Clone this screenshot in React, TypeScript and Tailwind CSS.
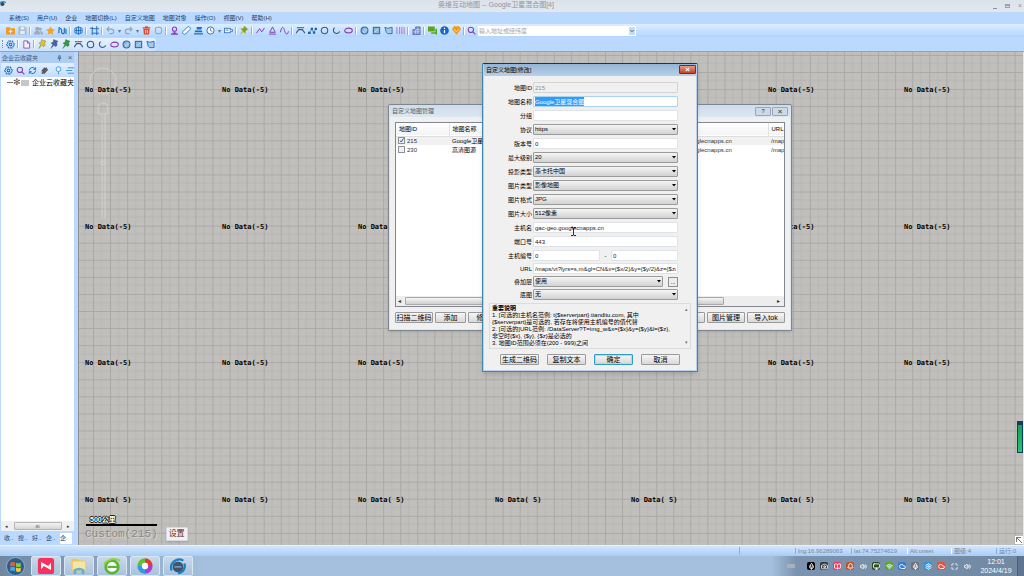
import React, { useEffect, useRef } from 'react';
import { Bell, BookOpen, Camera, ChevronDown, Cloud, Maximize, Mic, Monitor, Settings, Volume2, Wifi } from 'lucide-react';

const BLUE = '#2a6cb8';
const NAVY = '#3b5878';
const PURPLE = '#8a3fb0';

// every glyph is drawn on a 10x10 box
const glyphs: Record<string, React.ReactNode> = {
  add: <><path d="M0 1.500h4l1 1h5v7H0z" fill="#f59a23" /><path d="M5 4v4M3 6h4" stroke="#fff" /></>,
  save: <><path d="M1 1h7l1 1v7H1z" fill="#b4c0ce" stroke="#93a3b5" strokeWidth=".6" /><path d="M3 1h4v3H3zM2.5 5.5h5V9h-5z" fill="#e6edf5" /></>,
  users: <g fill="#9aabbd"><circle cx="3.5" cy="3" r="2.200" /><circle cx="6.8" cy="3.4" r="1.8" /><path d="M0 9.500c0-6 7-6 7 0zM7.5 9.500H10c0-3-1.500-4-3-4" /></g>,
  star: <path d="M5 .2l1.500 3.200 3.400.5-2.500 2.400.7 3.400L5 8.100 1.900 9.700l.7-3.400L.1 3.900l3.400-.5z" fill="#f9a11b" />,
  route: <g fill="none" stroke="#1f6fc0" strokeWidth="1.300"><path d="M1 8V4.500a1.500 1.500 0 013 0V7a1.500 1.500 0 003 0V2" /><path d="M8.800 3v6M.3 2h2" /></g>,
  globe: <g fill="none" stroke="#1f6fc0" strokeWidth="1"><path d="M1 2.500l4-1.500 4 1.500v5L5 9 1 7.500zM5 .5v9M1 5h8M3 2v6M7 2v6" /></g>,
  crop: <path d="M2.500 1v9M0 2.500h3M2.500 8H10M7.500 0v10M2.500 3H10" fill="none" stroke={BLUE} strokeWidth="1.100" />,
  undo: <path d="M3.500 1L1 3.500 3.500 6M1 3.500h5a2.500 2.500 0 010 5H4" fill="none" stroke="#8fa4bb" strokeWidth="1.200" />,
  redo: <path d="M6.500 1L9 3.500 6.500 6M9 3.500H4a2.500 2.500 0 000 5h2" fill="none" stroke="#8fa4bb" strokeWidth="1.200" />,
  trash: <><path d="M1.500 3h7l-.6 6.500H2.100z" fill="#e0482f" /><path d="M.8 2h8.400M3.500 1h3" stroke="#e0482f" strokeWidth="1.300" /><path d="M4 4.500v3.500M6 4.500v3.500" stroke="#fff" strokeWidth=".8" /></>,
  round: <rect x="1.500" y="1.500" width="7" height="7" rx="2" fill="none" stroke="#7f98b4" />,
  place: <g fill="none" stroke={PURPLE} strokeWidth="1.200"><circle cx="5" cy="3.500" r="2.300" /><path d="M5 6v2M1 9h8M3 7.500l2 1 2-1" /></g>,
  ruler: <rect x="3" y="0" width="4" height="10" rx="1.500" transform="rotate(45 5 5)" fill="#f2f7fd" stroke={BLUE} strokeWidth=".9" />,
  stamp: <path d="M3 1h6L8 4H3zM1 5h8v2H1zM0 8h10v1.500H0z" fill="#1f6fc0" />,
  clock: <><circle cx="5" cy="5" r="4" fill="#f2f7fd" stroke={BLUE} /><path d="M5 2.500V5l2 1" fill="none" stroke={BLUE} strokeWidth=".8" /></>,
  video: <g fill="#f2f7fd" stroke={BLUE} strokeWidth=".9"><rect x=".5" y="2.500" width="6.500" height="5" /><path d="M7 4h2.500v2H7M2 4.500h3" /></g>,
  pinMix: <path d="M5 0l4 4-1.500.3L6 6v2.500L3.500 6 1 9l2-3.500L1 3l2.800-.5z" fill="#6fa52c" stroke="#d9a518" strokeWidth=".6" />,
  zigzag: <path d="M.5 8L4 3l2.500 3.500L9.500 2" fill="none" stroke={PURPLE} strokeWidth="1.100" />,
  triangle: <path d="M5 1L8 7H2zM1 9h8" fill="none" stroke={PURPLE} strokeWidth="1.100" />,
  curve: <path d="M.5 7C2-1 4 1 5 5s3 6 4.500 1" fill="none" stroke={PURPLE} strokeWidth="1.100" />,
  bridge: <path d="M1 2h8M0 8l3-4h4l3 4" fill="none" stroke={NAVY} strokeWidth="1.200" />,
  points: <><path d="M1.500 7.500L4 4l2.500 3L8.500 3" fill="none" stroke={BLUE} strokeWidth=".8" /><path d="M0 6.500h3v2.500H0zM3 2h2.500v2.500H3zM5.500 6H8v2.500H5.500zM7.500 2H10v2.500H7.500z" fill="#1f5fa8" /></>,
  circle: <circle cx="5" cy="5" r="3.600" fill="none" stroke={NAVY} strokeWidth="1.200" />,
  arc: <path d="M3 1.800A3.600 3.600 0 108.500 6" fill="none" stroke={NAVY} strokeWidth="1.200" />,
  ellipse: <ellipse cx="5" cy="5" rx="4.200" ry="2.600" fill="none" stroke={PURPLE} strokeWidth="1.200" />,
  disc: <><circle cx="5" cy="5" r="3.800" fill="#8dbbe0" stroke={BLUE} strokeWidth="1.200" /><path d="M3 7l4-4M4 8l4-4" stroke="#dcebf8" strokeWidth=".6" /></>,
  square: <><rect x="1.500" y="1.500" width="7" height="7" fill="#8dbbe0" stroke={BLUE} strokeWidth="1.200" /><path d="M3 7l4-4" stroke="#dcebf8" strokeWidth=".8" /></>,
  poly: <path d="M1 1.500l3 1 5-1v7H4L2.500 7z" fill="#a5cae8" stroke={BLUE} />,
  bars: <><path d="M1 1v8M4 1v8M9 1v8" stroke="#b06cd0" strokeWidth="1" /><path d="M6.500 1v8" stroke="#e05a8a" /></>,
  building: <><path d="M1 4h3V1h5v8.500H1z" fill="#7d8fd0" stroke="#4b58a8" strokeWidth=".8" /><path d="M4 4v5M6.500 1.500v7.500M1 6.500h8M4 4h5" stroke="#dfe4fa" strokeWidth=".7" /></>,
  chat: <path d="M0 .5h7.500v5.500H0zM8.200 3H10v7L8 8.500H3.500V7h4.700z" fill="#5aa51e" />,
  info: <><circle cx="5" cy="5" r="4.800" fill="#1667c4" /><path d="M5 4.500V8M5 2v1.300" stroke="#fff" strokeWidth="1.400" /></>,
  gem: <><path d="M2 .3h6l2 3.200L5 9.800 0 3.500z" fill="#f39a1b" /><path d="M2.500 3.500L5 6.500l2.500-3" fill="none" stroke="#ffe6b5" strokeWidth=".9" /></>,
  search: <g fill="none" stroke={PURPLE} strokeWidth="1.200"><circle cx="4.300" cy="4.300" r="3" /><path d="M6.600 6.600L9.300 9.300" /></g>,
  gear: <g fill="none" stroke="#1f6fc0"><path d="M3 1.200h4L9.300 5 7 8.800H3L.7 5z" strokeWidth="1.300" strokeDasharray="2.500 .7" /><circle cx="5" cy="5" r="1.500" strokeWidth="1.200" /></g>,
  doc: <path d="M2 1h4l2.500 2.500V9H2zM6 1v2.500h2.500" fill="#f6effc" stroke={PURPLE} strokeWidth=".9" />,
  sync: <path d="M1.500 5A3.500 3.500 0 018 3.300M8.500 5A3.500 3.500 0 012 6.700M8.500 1.500v2.200H6M1.500 8.500V6.300H4" fill="none" stroke="#1f6fc0" strokeWidth="1.100" />,
  clip: <path d="M2 8.500L7.500 2M2 6L5.500 2M4 8.500L8.500 3.500" stroke="#555" strokeWidth="1.600" />,
  bulb: <><circle cx="5" cy="3.500" r="2.700" fill="#dff0ff" stroke="#3d9bd8" /><path d="M5 6v3.500" stroke="#3d9bd8" /></>,
  list: <path d="M2 2h8M0 5h7M2 8h8" stroke="#3d9bd8" strokeWidth="1.100" />,
};

const Glyph = ({ name, className = 'h-[9px] w-[9px]' }: { name: string; className?: string }) => (
  <svg viewBox="0 0 10 10" className={`shrink-0 ${className}`} aria-hidden="true">{glyphs[name]}</svg>
);

const Pin = ({ color }: { color: string }) => (
  <svg viewBox="0 0 10 10" className="h-[10px] w-[9px]" aria-hidden="true">
    <path d="M4 0l5 2-1.500 1.500.5 3L6 8 4.500 6.500 1 10l2-4.500L1 4l2.500-1z" fill={color} stroke="#4b5b52" strokeWidth=".4" />
  </svg>
);

const ToolButton = ({ name }: { name: string }) => (
  <button aria-label={name} className="flex h-2.5 w-2.5 shrink-0 items-center justify-center"><Glyph name={name} /></button>
);

const Separator = () => <span className="h-2 w-0.5 shrink-0 border-r border-white bg-[#8db4de]" />;

const mainTools = [
  'add', 'save', '|', 'users', 'star', 'route', '|', 'globe', '|', 'crop', '|', 'undo', '.', 'redo', '.', 'trash', 'round', '|',
  'place', 'ruler', 'stamp', 'clock', '.', 'video', '|', 'pinMix', '|', 'zigzag', 'triangle', 'curve', '|',
  'bridge', 'points', 'circle', 'arc', 'ellipse', '|', 'disc', 'square', 'poly', 'bars', '|', 'building', '|',
  'chat', 'info', 'gem', '|',
];

const menus = ['系统(S)', '用户(U)', '企业', '地图切换(L)', '自定义地图', '地图对象', '操作(O)', '视图(V)', '帮助(H)'];

const TopBars = () => (
  <header className="shrink-0">
    <div className="relative flex h-3 items-center justify-center bg-gradient-to-b from-[#dbe2ea] to-[#e1e8f0]">
      <svg viewBox="0 0 10 10" className="absolute left-0 top-0 h-2 w-1.5" aria-hidden="true">
        <circle cx="4" cy="5" r="3.500" fill="#2c4a68" /><path d="M0 3q5-4 10 0" stroke="#2f86c8" strokeWidth="2" fill="none" />
      </svg>
      <h1 className="pb-1 pr-8 text-[7px] leading-none text-[#8f959d]">奥维互动地图 -- Google卫星混合图[4]</h1>
      <div className="absolute right-0.5 top-0.5 flex gap-2">
        <button aria-label="minimize" className="flex h-[7px] w-1 items-end"><span className="h-px w-1 bg-[#8b929b]" /></button>
        <button aria-label="maximize" className="mt-0.5 h-1 w-[5px] border border-t-2 border-[#9aa1aa]" />
        <button aria-label="close" className="h-[7px] w-1 text-[7px] leading-[7px] text-[#8b929b]">×</button>
      </div>
    </div>
    <nav className="flex h-3 items-center gap-2 bg-[#bbd9fe] px-[9px] text-[6px] leading-none text-[#1e3c66]">
      {menus.map((m) => <button key={m}>{m}</button>)}
    </nav>
    <div className="flex h-[13px] items-center gap-0.5 bg-gradient-to-b from-[#dceeff] to-[#b1d5fd] pl-[5px]">
      {mainTools.map((t, i) => {
        if (t === '|') return <Separator key={i} />;
        if (t === '.') return <span key={i} className="flex w-1 justify-center text-[6px] leading-none text-[#5d7795]">▾</span>;
        return <ToolButton key={i} name={t} />;
      })}
      <label className="flex items-center gap-0.5">
        <Glyph name="search" />
        <input aria-label="search" placeholder="输入地址或经纬度" className="h-[10px] w-[150px] bg-white px-px text-[6px] leading-none placeholder:text-[#a5a5a5]" />
      </label>
      <button aria-label="search history" className="-ml-0.5 flex h-[10px] w-2 items-center justify-center border border-white bg-[#c3dcf8] text-[#41658f]">
        <ChevronDown className="h-1.5 w-1.5" strokeWidth={4} />
      </button>
    </div>
    <div className="flex h-[15px] items-center border-b border-[#8fa4bb] bg-[#bbd9fe]">
      <div className="flex h-[13px] items-center gap-0.5 rounded-r bg-gradient-to-b from-[#e6f1ff] to-[#cde2fc] pl-0.5 pr-px">
        <span className="h-2 w-px border-l border-dotted border-[#6f93bb]" />
        <ToolButton name="gear" /><Separator /><ToolButton name="doc" /><Separator />
        {['#e3c81c', '#3f62a8', '#25a03a'].map((c) => (
          <button key={c} aria-label="pin" className="flex w-2.5 justify-center"><Pin color={c} /></button>
        ))}
        {['bridge', 'circle', 'arc', 'ellipse', 'disc', 'square', 'poly'].map((t) => <ToolButton key={t} name={t} />)}
      </div>
    </div>
  </header>
);

const FavoritesPanel = () => (
  <aside className="flex w-[79px] shrink-0 flex-col border-r border-[#8c8f93] bg-[#bbd9fe] pl-px pr-1">
    <div className="flex h-[11px] items-center bg-[#aecdf2] px-px text-[6px] leading-none text-[#3d5f88]">
      <h2 className="flex-1 whitespace-nowrap">企业云收藏夹</h2>
      <button aria-label="pin panel" className="w-2.5">
        <svg viewBox="0 0 6 8" className="h-1.5 w-[5px]"><path d="M2 1h2v3H2zM.5 4.500h5M3 5v3" fill="none" stroke="#3d5f88" /></svg>
      </button>
      <button aria-label="close panel" className="w-1.5 text-[8px] leading-none">×</button>
    </div>
    <div className="flex h-[14px] items-center gap-0.5 overflow-hidden bg-gradient-to-b from-[#e3f0ff] to-[#c2dcfb] pl-0.5">
      <ToolButton name="gear" /><ToolButton name="search" /><ToolButton name="sync" /><ToolButton name="clip" />
      <span className="h-2 w-px bg-[#6f93bb]" />
      <ToolButton name="bulb" /><ToolButton name="list" />
    </div>
    <div className="flex-1 overflow-hidden bg-white pl-1.5 pt-0.5">
      <div className="flex items-center whitespace-nowrap text-[7px] leading-[7px] text-black">
        <span className="h-px w-1.5 bg-[#777]" />
        <span className="text-[9px] leading-[7px] text-[#555]">✻</span>
        <span className="mr-[3px] h-1.5 w-2 bg-[#c6c6c6]" />
        企业云收藏夹
      </div>
    </div>
    <div className="flex h-[10px] items-center justify-between bg-[#eef0f2] px-1 text-[5px] leading-none text-[#333]">
      <span>◂</span>
      <span className="flex h-2 w-12 items-center justify-center rounded-[1px] border border-[#b4b4b4] bg-gradient-to-b from-[#f4f4f4] to-[#d4d4d4]">ııı</span>
      <span>▸</span>
    </div>
    <div className="flex h-[14px] items-center gap-[3px] overflow-hidden whitespace-nowrap pl-[3px] text-[6px] leading-none text-[#24446e]">
      {['收..', '搜..', '好..', '企..'].map((t) => <button key={t} className="w-[11px] text-left">{t}</button>)}
      <button className="h-[11px] w-3 rounded-[1px] bg-white text-left">企.</button>
    </div>
  </aside>
);

const TILE = 136.53;

const MapView = () => (
  <main className="relative min-w-0 flex-1 overflow-hidden border-r border-[#e4e8ee] bg-[#c1bfbb]">
    <svg className="absolute inset-0 h-full w-full" aria-hidden="true">
      <defs>
        <pattern id="mesh" width="17.067" height="17.067" x="14" y="3" patternUnits="userSpaceOnUse">
          <path d="M0 8.500h17.100M8.500 0v17.100" stroke="#b5b4b4" strokeWidth=".9" />
          <path d="M0 .5h17.100M.5 0v17.100" stroke="#aaa9a8" strokeWidth="1" />
        </pattern>
      </defs>
      <rect width="100%" height="100%" fill="url(#mesh)" />
      <g fill="none" stroke="#d6d5d1" strokeWidth=".8">
        <circle cx="24" cy="29" r="13" />
        <path d="M19 62v-6a5 5 0 0110 0v6zM23 62v105M26 62v105" />
        <circle cx="24" cy="111" r="2" />
      </g>
    </svg>
    {[0, 1, 2, 3].map((row) =>
      [0, 1, 2, 3, 4, 5, 6].map((col) => (
        <span
          key={`${row}-${col}`}
          className="absolute whitespace-pre font-['DejaVu_Sans_Mono',monospace] text-[7px] font-bold leading-2 text-black"
          style={{ left: Math.round(6 + col * TILE), top: Math.round(34 + row * TILE) }}
        >
          {row === 3 ? 'No Data( 5)' : 'No Data(-5)'}
        </span>
      ))
    )}
    <div className="absolute bottom-[3px] left-1.5">
      <div className="ml-px w-[71px] border-b-2 border-black px-1 text-[7px] font-bold leading-[9px] text-white [text-shadow:1px_0_#111,-1px_0_#111,0_1px_#111,0_-1px_#111]">500公里</div>
      <div className="flex items-center gap-2">
        <span className="font-['Liberation_Mono',monospace] text-[11px] leading-4 text-[#8b8a87] [text-shadow:1px_1px_#d6d5d1]">Custom(215)</span>
        <button className="h-[14px] w-[22px] rounded-[1px] border border-[#d4dbe5] bg-[#f1f1f3] text-[8px] leading-none text-[#6e1f1f] shadow-sm">设置</button>
      </div>
    </div>
    <div className="absolute bottom-[92px] right-0 h-8 w-1.5 border border-t-4 border-[#123f55] bg-gradient-to-b from-[#1c9a5c] to-[#2cc36e]" />
    <button aria-label="expand" className="absolute bottom-px right-0 flex h-2 w-2 items-center justify-center bg-white">
      <svg viewBox="0 0 8 8" className="h-2 w-2"><path d="M1.500 6V1.500H6M1.500 1.500L7 7" fill="none" stroke="#555" strokeWidth=".8" /></svg>
    </button>
  </main>
);

const WinButton = ({ children, border = 'border-[#9a9a9a]', className = '' }: { children: React.ReactNode; border?: string; className?: string }) => (
  <button className={`h-[11px] shrink-0 whitespace-nowrap rounded-[1px] border bg-gradient-to-b from-[#f6f6f6] to-[#d8d8d8] text-[7px] leading-none text-black ${border} ${className}`}>
    {children}
  </button>
);

const maps = [
  { id: 215, name: 'Google卫星混合图', checked: true },
  { id: 230, name: '高清图源', checked: false },
];

const ManagerDialog = () => (
  <section className="absolute left-[388px] top-[104px] w-[404px] rounded-t-[2px] border border-[#7e8790] bg-[#dce6f1] px-px pb-px shadow">
    <div className="flex h-3 items-center bg-gradient-to-b from-[#cfdcea] to-[#dce7f3] px-0.5 text-[6px] leading-none text-[#555c66]">
      <h2 className="flex-1">自定义地图管理</h2>
      <button aria-label="help" className="h-[9px] w-4 rounded-[1px] border border-[#98a8ba] bg-[#ccd9e7] font-bold">?</button>
      <button aria-label="close" className="ml-px h-[9px] w-4 rounded-[1px] border border-[#98a8ba] bg-[#ccd9e7] text-[8px] font-bold leading-[7px]">×</button>
    </div>
    <div className="bg-[#f0f0f0] px-[5px] pb-1.5 pt-[5px]">
      <div className="overflow-hidden border border-[#82878f] bg-white">
        <table className="w-full table-fixed border-collapse text-[6px] leading-none text-black">
          <colgroup>
            <col className="w-[53px]" /><col className="w-[212px]" /><col className="w-[107px]" /><col />
          </colgroup>
          <thead>
            <tr className="h-[13px] border-b border-[#dedede] bg-gradient-to-b from-white to-[#f3f4f5] text-left">
              <th className="border-r border-[#e3e3e3] p-0 pl-[3px] font-normal">地图ID</th>
              <th className="p-0 pl-[3px] font-normal">地图名称</th>
              <th className="border-r border-[#e3e3e3] p-0 pl-[3px] font-normal">主机名</th>
              <th className="p-0 pl-[3px] font-normal">URL</th>
            </tr>
          </thead>
          <tbody>
            {maps.map((m) => (
              <tr key={m.id} className={`h-[9px] ${m.checked ? 'bg-[#f1f1f1]' : ''}`}>
                <td className="p-0 pl-0.5">
                  <label className="flex items-center gap-0.5 text-[#333]">
                    <span className="relative flex h-[7px] w-[7px]">
                      <input type="checkbox" defaultChecked={m.checked} className="h-[7px] w-[7px] appearance-none border border-[#8d9299] bg-[#eef0f3]" />
                      {m.checked && (
                        <svg viewBox="0 0 7 7" className="pointer-events-none absolute inset-0"><path d="M2 3.500l1.200 1.500L5.500 1.500" fill="none" stroke="#2d4f9c" /></svg>
                      )}
                    </span>
                    {m.id}
                  </label>
                </td>
                <td className="truncate p-0 pl-[3px]">{m.name}</td>
                <td className="whitespace-nowrap p-0 pl-0.5 text-[#333]">gac-geo.googlecnapps.cn</td>
                <td className="overflow-hidden whitespace-nowrap p-0 pl-[3px] text-[#333]">/maps</td>
              </tr>
            ))}
          </tbody>
        </table>
        <div className="h-[142px]" />
        <div className="flex h-[10px] items-center bg-[#ededed] px-0.5 text-[6px] leading-none text-[#333]">
          <span className="w-[7px]">◂</span>
          <span className="h-2 w-[319px] rounded-[1px] border border-[#a8a8a8] bg-gradient-to-b from-[#f5f5f5] to-[#cfcfcf]" />
          <span className="ml-auto w-[7px] text-center">▸</span>
        </div>
      </div>
      <div className="mt-[5px] flex gap-0.5">
        <WinButton className="w-[38px]">扫描二维码</WinButton>
        <WinButton className="w-[31px]">添加</WinButton>
        <WinButton className="w-[31px]">修改</WinButton>
        <WinButton className="ml-auto w-[38px]">分享</WinButton>
        <WinButton className="w-[38px]">图片管理</WinButton>
        <WinButton className="w-[38px]">导入tok</WinButton>
      </div>
    </div>
  </section>
);

const inputBase = 'h-[11px] min-w-0 flex-1 rounded-[1px] border px-px text-[6px] leading-none';
const inputStyle = `${inputBase} border-[#dfe3e8] bg-white text-[#222]`;

const Field = ({ label, id, children }: { label: string; id: string; children: React.ReactNode }) => (
  <div className="flex h-[11px] items-center">
    <label htmlFor={id} className="w-[49px] shrink-0 pr-px text-right text-[6px] leading-none text-black">{label}</label>
    {children}
  </div>
);

const Select = ({ id, value }: { id: string; value: string }) => (
  <div className="relative flex min-w-0 flex-1">
    <select id={id} className="h-[11px] w-full appearance-none rounded-[1px] border border-[#9b9b9b] bg-gradient-to-b from-[#f5f5f5] to-[#d2d2d2] px-px text-[6px] leading-[9px] text-black">
      <option>{value}</option>
    </select>
    <svg viewBox="0 0 4 3" className="pointer-events-none absolute right-0.5 top-1 h-[3px] w-1"><path d="M0 0h4L2 2.600z" fill="#000" /></svg>
  </div>
);

const selects = [
  ['最大级别', '20'], ['投影类型', '墨卡托中国'], ['图片类型', '影像地图'], ['图片格式', 'JPG'], ['图片大小', '512像素'],
];

const EditDialog = () => {
  const nameRef = useRef<HTMLInputElement>(null);

  useEffect(() => {
    nameRef.current?.focus();
    nameRef.current?.select();
  }, []);

  return (
    <section className="absolute left-[482px] top-[63px] w-[216px] rounded-t-[2px] border border-t-[#26323f] border-x-[#3f86a8] border-b-[#3f86a8] bg-[#b9d1ea] px-px pb-px shadow-md">
      <div className="flex h-3 items-start bg-gradient-to-b from-[#94b4d6] to-[#b7d0e9] pl-0.5 text-[6px] leading-3 text-black">
        <h2 className="flex-1">自定义地图[修改]</h2>
        <button aria-label="close" className="mt-px h-[9px] w-[17px] rounded-[1px] border border-[#7b2c22] bg-gradient-to-b from-[#e09a8b] to-[#c2401f] text-[8px] font-bold leading-[6px] text-white">×</button>
      </div>
      <div className="bg-[#f0f0f0] pb-[5px] pt-1.5">
        <form className="flex flex-col gap-[3px] pr-[18px]">
          <Field label="地图ID" id="mapId"><input id="mapId" disabled value="215" className={`${inputBase} border-[#d4d4d4] bg-[#f0f0f0] text-[#8a8a8a]`} /></Field>
          <Field label="地图名称" id="name">
            <input id="name" ref={nameRef} defaultValue="Google卫星混合图" className={`${inputBase} border-[#a9d3ee] bg-white text-[#222] outline-none selection:bg-[#3399ff] selection:text-white`} />
          </Field>
          <Field label="分组" id="group"><input id="group" className={inputStyle} /></Field>
          <Field label="协议" id="protocol"><Select id="protocol" value="https" /></Field>
          <Field label="版本号" id="version"><input id="version" defaultValue="0" className={inputStyle} /></Field>
          {selects.map(([label, value]) => (
            <Field key={label} label={label} id={label}><Select id={label} value={value} /></Field>
          ))}
          <Field label="主机名" id="host"><input id="host" defaultValue="gac-geo.googlecnapps.cn" className={inputStyle} /></Field>
          <Field label="端口号" id="port"><input id="port" defaultValue="443" className={inputStyle} /></Field>
        </form>
        <form className="mt-[3px] flex flex-col gap-0.5 pr-[18px]">
          <Field label="主机编号" id="hostFrom">
            <input id="hostFrom" defaultValue="0" className={inputStyle} />
            <span className="w-[11px] text-center text-[6px] leading-none">-</span>
            <input aria-label="主机编号止" defaultValue="0" className={inputStyle} />
          </Field>
          <Field label="URL" id="url">
            <input id="url" defaultValue="/maps/vt?lyrs=s,m&gl=CN&x={$x/2}&y={$y/2}&z={$z/2}" className={inputStyle} />
          </Field>
          <Field label="叠加层" id="overlay">
            <Select id="overlay" value="使用" />
            <button type="button" className="ml-[5px] h-2.5 w-2.5 border border-[#8f8f8f] bg-[#ececec] text-[6px] leading-none">...</button>
          </Field>
          <Field label="底图" id="base"><Select id="base" value="无" /></Field>
        </form>
        <div className="mx-[5px] mt-[3px] flex h-[46px] border border-[#dcdcdc] text-[6px] leading-[7px] text-black">
          <div className="flex-1 pl-0.5 pt-px">
            <p className="font-bold">重要说明</p>
            <p>1. [可选的]主机名范例: t{'{$serverpart}'}.tianditu.com, 其中<br />{'{$serverpart}'}是可选的, 若存在将使用主机编号的值代替</p>
            <p>2. [可选的]URL范例: /DataServer?T=img_w&x={'{$x}'}&y={'{$y}'}&l={'{$z}'},<br />非空时{'{$x}, {$y}, {$z}'}是必选的</p>
            <p>3. 地图ID范围必须在(200 - 999)之间</p>
          </div>
          <div className="flex w-2 flex-col items-center justify-between py-0.5 text-[5px] text-[#777]"><span>▴</span><span>▾</span></div>
        </div>
        <div className="mt-[5px] flex justify-center gap-2">
          <WinButton className="w-[39px]">生成二维码</WinButton>
          <WinButton className="w-[39px]">复制文本</WinButton>
          <WinButton border="border-[#2f9fc4]" className="w-[39px] ring-1 ring-inset ring-[#9be0f5]">确定</WinButton>
          <WinButton className="w-[39px]">取消</WinButton>
        </div>
      </div>
    </section>
  );
};

const StatusBar = () => (
  <div className="flex h-[11px] shrink-0 items-center justify-end border-t border-[#e8f1fb] bg-gradient-to-b from-[#d3e6fc] to-[#a9cdf5] text-[6px] leading-none text-[#75869a]">
    <span className="h-2 w-14 border-l border-[#8fb0d6]" />
    <span className="w-14 border-l border-[#8fb0d6] pl-0.5">lng:16.96289063</span>
    <span className="w-14 border-l border-[#8fb0d6] pl-0.5">lat:74.75274619</span>
    <span className="w-11 border-l border-white pl-0.5">Alt:unset</span>
    <span className="w-[45px] border-l border-white pl-0.5">图级:4</span>
    <span className="w-7 border-l border-[#8fb0d6] pl-0.5">运行:0</span>
  </div>
);

const taskIcons: React.ReactNode[] = [
  <><rect x="1" y="1" width="18" height="18" rx="3" fill="#f4335f" /><path d="M4.500 5.500l8 4.500 3-3.500v8l-8-4.500-3 4z" fill="#fff" /></>,
  <><path d="M2 2h6l2 2h8v13H2z" fill="#e9c65c" /><path d="M3 5h14v10H3z" fill="#f7e6a0" /><path d="M4 19v-5q6-4 12 0v5h-3v-4H7v4z" fill="#5fb0e0" /></>,
  <><circle cx="10" cy="11" r="7" fill="#fff" stroke="#5cb531" strokeWidth="3" /><path d="M5 11h11" stroke="#5cb531" strokeWidth="2.500" /><path d="M1 8Q9-1 19 4" fill="none" stroke="#8fd63d" strokeWidth="2" /></>,
  <g fill="none" strokeWidth="5"><path d="M10 4a6 6 0 016 6" stroke="#e23b35" /><path d="M16 10a6 6 0 01-6 6" stroke="#a341d2" /><path d="M10 16a6 6 0 01-6-6" stroke="#2f9be6" /><path d="M4 10a6 6 0 016-6" stroke="#5fc032" /><circle cx="10" cy="10" r="3.500" fill="#fff" stroke="none" /></g>,
  <><circle cx="10" cy="11" r="6" fill="#3d566e" /><path d="M3 15A9 9 0 0116 4M17 7a8 8 0 01-7 11" fill="none" stroke="#1e7fc4" strokeWidth="2.500" /><path d="M6 11h8" stroke="#8ba6bd" strokeWidth="1.500" /></>,
];

const tray = [
  { bg: 'bg-black', Icon: Mic }, { bg: 'bg-[#34383e]', Icon: Camera }, { bg: 'bg-[#f4335f]', Icon: BookOpen },
  { bg: 'bg-[#b8562b]', Icon: Bell }, { bg: '', Icon: Volume2 }, { bg: 'bg-[#2c4a1b]', Icon: Monitor },
  { bg: 'bg-[#57a832]', Icon: Wifi }, { bg: 'bg-[#2f7fd6]', Icon: Cloud }, { bg: 'bg-[#6b747e]', Icon: Mic },
  { bg: 'bg-[#2a93e8]', Icon: Settings }, { bg: 'bg-[#e4513d]', Icon: Cloud }, { bg: '', Icon: Maximize }, { bg: '', Icon: Volume2 },
];

const Taskbar = () => (
  <footer className="flex h-5 shrink-0 items-center bg-gradient-to-r from-[#70879f] via-[#a5c0de] via-20% to-[#a5c0de]">
    <button aria-label="start" className="flex w-[31px] justify-center">
      <svg viewBox="0 0 20 20" className="h-[19px] w-[19px]">
        <circle cx="10" cy="10" r="9.500" fill="#2d5f8c" stroke="#9fc0dc" strokeWidth=".8" />
        <path d="M4.500 6q2.500-1.500 5 0v4q-2.500-1.500-5 0z" fill="#e8612c" /><path d="M10.500 6q2.500 1.500 5 0v4q-2.500 1.500-5 0z" fill="#8ccb3c" />
        <path d="M4.500 11q2.500-1.500 5 0v4q-2.500-1.500-5 0z" fill="#49a9e8" /><path d="M10.500 11q2.500 1.500 5 0v4q-2.500 1.500-5 0z" fill="#f7c93a" />
      </svg>
    </button>
    <div className="flex h-full gap-[3px]">
      {taskIcons.map((icon, i) => (
        <button key={i} aria-label="task" className="flex w-[30px] items-center justify-center rounded-[2px] border border-[#d9e6f3] bg-gradient-to-b from-[#c9d9ea] to-[#a9c2dc]">
          <svg viewBox="0 0 20 20" className="h-[18px] w-[18px]">{icon}</svg>
        </button>
      ))}
    </div>
    <div className="ml-auto flex h-full items-center bg-gradient-to-r from-[#a5c0de] via-[#7b93ae] via-10% to-[#7289a3] pl-4">
      <span className="mr-3 h-1 w-2 bg-[#a9b2bb]" />
      <div className="flex gap-[5px] pr-1">
        {tray.map(({ bg, Icon }, i) => (
          <span key={i} className={`flex h-2 w-2 items-center justify-center rounded-[2px] text-white ${bg}`}><Icon className="h-[7px] w-[7px]" strokeWidth={3} /></span>
        ))}
      </div>
      <time className="w-[42px] text-center text-[7px] leading-[9px] text-white">12:01<br />2024/4/19</time>
      <span className="h-full w-[7px] border-l border-[#4e6078] bg-[#5f7490]" />
    </div>
  </footer>
);

export default function App() {
  return (
    <div className="relative flex h-screen flex-col overflow-hidden font-['Liberation_Sans','Noto_Sans_CJK_SC',sans-serif]">
      <TopBars />
      <div className="flex min-h-0 flex-1">
        <FavoritesPanel />
        <MapView />
      </div>
      <StatusBar />
      <Taskbar />
      <ManagerDialog />
      <EditDialog />
      <svg viewBox="0 0 5 9" className="pointer-events-none absolute left-[571px] top-[227px] h-[9px] w-[5px]" aria-hidden="true">
        <path d="M0 .5h2l.5.5.5-.5h2M2.500 1v7M0 8.500h2l.5-.5.5.5h2" fill="none" stroke="#000" strokeWidth=".8" />
      </svg>
    </div>
  );
}
